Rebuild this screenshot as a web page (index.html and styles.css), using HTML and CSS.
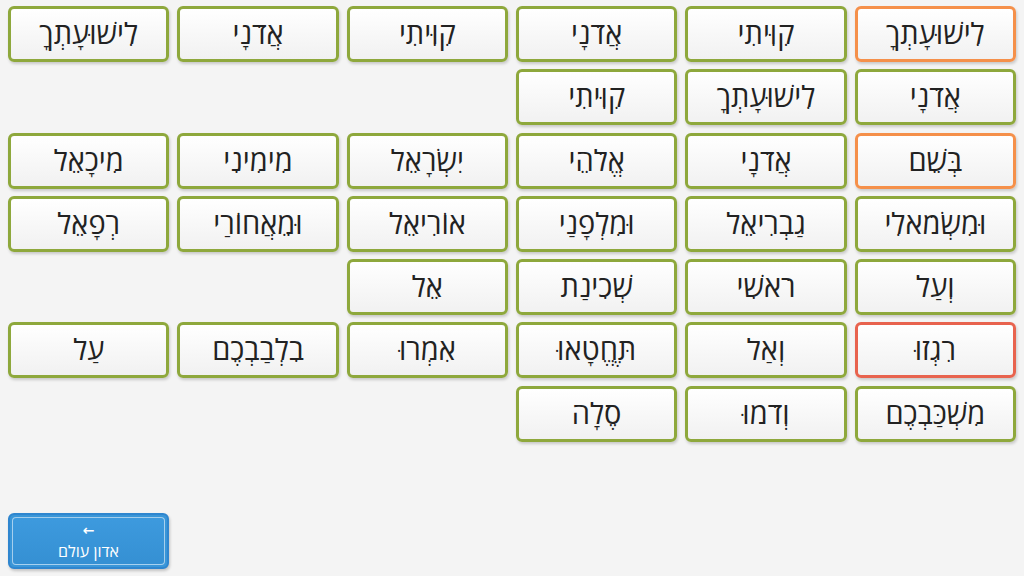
FILE: index.html
```html
<!DOCTYPE html>
<html lang="he" dir="rtl">
<head>
<meta charset="utf-8">
<link rel="stylesheet" href="styles.css">
</head>
<body>
<div class="page">
  <div class="grid">
    <div class="btn orange">לִישׁוּעָתְךָ</div>
    <div class="btn">קִוִּיתִי</div>
    <div class="btn">אֲדֹנָי</div>
    <div class="btn">קִוִּיתִי</div>
    <div class="btn">אֲדֹנָי</div>
    <div class="btn">לִישׁוּעָתְךָ</div>

    <div class="btn">אֲדֹנָי</div>
    <div class="btn">לִישׁוּעָתְךָ</div>
    <div class="btn">קִוִּיתִי</div>
    <div class="empty"></div>
    <div class="empty"></div>
    <div class="empty"></div>

    <div class="btn orange">בְּשֵׁם</div>
    <div class="btn">אֲדֹנָי</div>
    <div class="btn">אֱלֹהֵי</div>
    <div class="btn">יִשְׂרָאֵל</div>
    <div class="btn">מִימִינִי</div>
    <div class="btn">מִיכָאֵל</div>

    <div class="btn">וּמִשְׂמֹאלִי</div>
    <div class="btn">גַבְרִיאֵל</div>
    <div class="btn">וּמִלְפָנַי</div>
    <div class="btn">אוֹרִיאֵל</div>
    <div class="btn">וּמֵאֲחוֹרַי</div>
    <div class="btn">רְפָאֵל</div>

    <div class="btn">וְעַל</div>
    <div class="btn">רֹאשִׁי</div>
    <div class="btn">שְׁכִינַת</div>
    <div class="btn">אֵל</div>
    <div class="empty"></div>
    <div class="empty"></div>

    <div class="btn red">רִגְזוּ</div>
    <div class="btn">וְאַל</div>
    <div class="btn">תֶּחֱטָאוּ</div>
    <div class="btn">אִמְרוּ</div>
    <div class="btn">בִלְבַבְכֶם</div>
    <div class="btn">עַל</div>

    <div class="btn">מִשְׁכַּבְכֶם</div>
    <div class="btn">וְדֹמוּ</div>
    <div class="btn">סֶלָה</div>
    <div class="empty"></div>
    <div class="empty"></div>
    <div class="empty"></div>
  </div>
  <div class="footer">
    <div class="back">
      <div class="back-inner">
        <span class="arrow">&#8592;</span>
        <span class="back-label">אדון עולם</span>
      </div>
    </div>
  </div>
</div>
</body>
</html>
```

FILE: styles.css
```css
html, body {
  margin: 0;
  padding: 0;
  background: #f4f4f4;
}
body {
  width: 1024px;
  height: 576px;
  overflow: hidden;
  font-family: "Open Sans", "DejaVu Sans", sans-serif;
}
.page {
  display: flex;
  flex-direction: column;
  justify-content: space-between;
  height: 576px;
  padding: 6px 8px 7px 8px;
  box-sizing: border-box;
}
.grid {
  display: grid;
  grid-template-columns: repeat(6, 1fr);
  grid-auto-rows: 56px;
  column-gap: 8px;
  row-gap: 7.3px;
}
.btn {
  box-sizing: border-box;
  border: 3px solid #8ea83c;
  border-radius: 6px;
  background: linear-gradient(#ffffff, #f1f1f1);
  box-shadow: 1px 2px 3px rgba(0, 0, 0, 0.18);
  display: flex;
  align-items: center;
  justify-content: center;
  font-size: 29px;
  color: #222;
  line-height: 1;
  padding-bottom: 3px;
}
.btn.orange {
  border-color: #f5904a;
}
.btn.red {
  border-color: #e8634e;
}
.footer {
  display: flex;
  direction: ltr;
}
.back {
  width: 161px;
  height: 56px;
  box-sizing: border-box;
  border: 2px solid #2f86cf;
  border-radius: 6px;
  background: #3a96d8;
  box-shadow: 1px 2px 3px rgba(0, 0, 0, 0.2);
  padding: 2px;
}
.back-inner {
  box-sizing: border-box;
  height: 100%;
  border: 1px solid rgba(255, 255, 255, 0.55);
  border-radius: 4px;
  background: linear-gradient(#3d9ade, #3590d3);
  display: flex;
  flex-direction: column;
  align-items: center;
  justify-content: center;
  color: #fff;
  gap: 6px;
}
.arrow {
  font-size: 14px;
  line-height: 1;
  font-weight: bold;
  font-family: "DejaVu Sans", sans-serif;
}
.back-label {
  font-size: 16px;
  line-height: 1;
  direction: rtl;
}
```
